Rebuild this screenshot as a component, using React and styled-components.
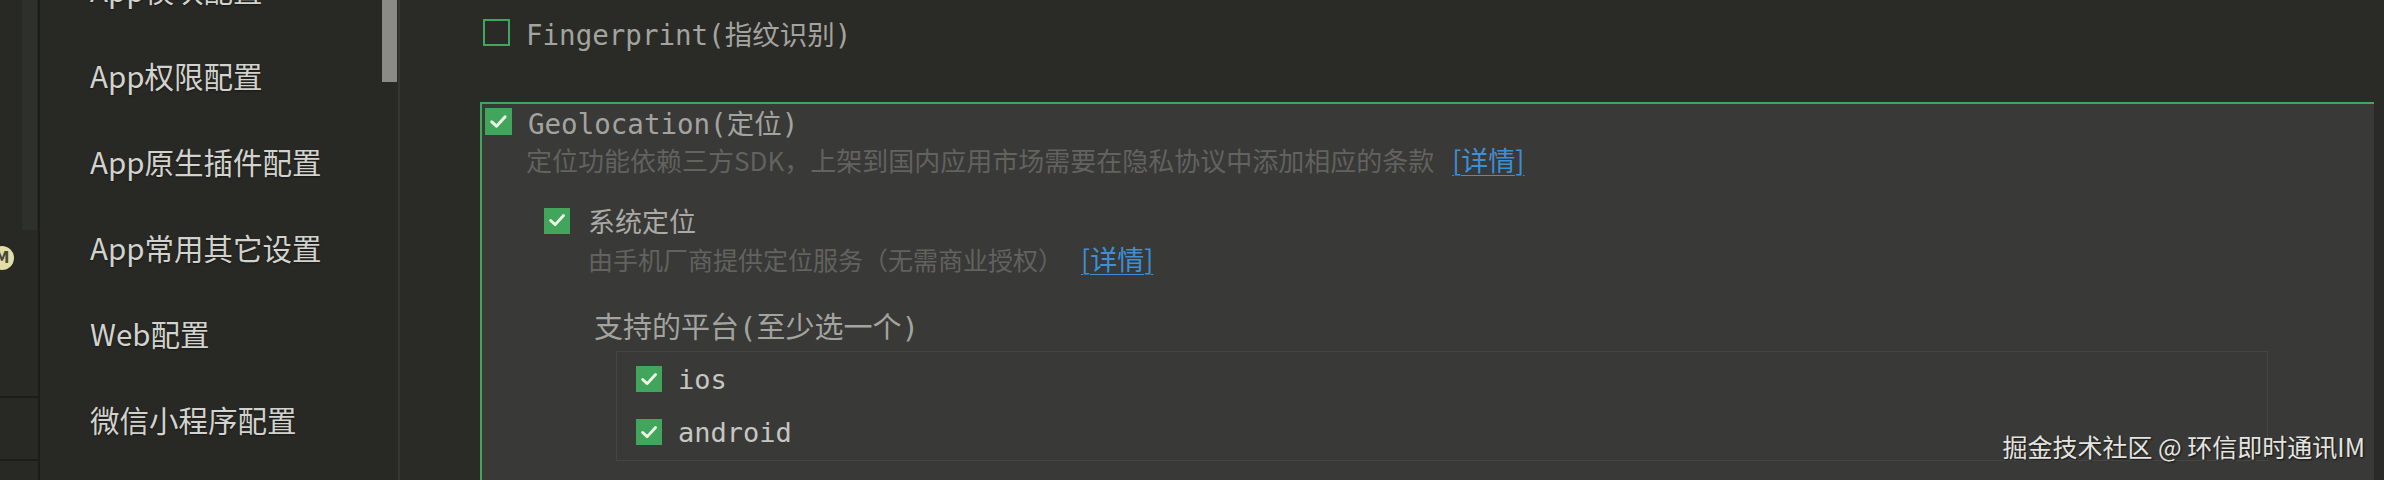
import styled, { createGlobalStyle } from "styled-components";

const COLORS = {
  bg: "#2a2a26",
  rail: "#282824",
  railLine: "#1c1c19",
  green: "#41a55c",
  panel: "#393937",
  label: "#a3a39f",
  bright: "#c6c6c2",
  dim: "#62625f",
  link: "#3d8fd6",
  sideText: "#d2d2ce",
};

const MENU = [
  "App模块配置",
  "App权限配置",
  "App原生插件配置",
  "App常用其它设置",
  "Web配置",
  "微信小程序配置",
];

const GlobalStyle = createGlobalStyle`
  html, body {
    margin: 0;
    padding: 0;
    background: ${COLORS.bg};
  }
  * { box-sizing: border-box; }
`;

const Check = ({ checked, size }) => (
  <Box $checked={checked} $size={size}>
    {checked && (
      <svg width="70%" height="70%" viewBox="0 0 24 24" fill="none">
        <path
          d="M3.5 12.5 L9.5 18 L20.5 6"
          stroke="#eef7e6"
          strokeWidth="3.8"
          strokeLinecap="round"
          strokeLinejoin="round"
        />
      </svg>
    )}
  </Box>
);

const App = () => {
  return (
    <>
      <GlobalStyle />
      <Screen>
        <Rail>
          <RailTrack />
          <RailTop />
          <RailCell />
          <RailRest />
          <Badge>M</Badge>
        </Rail>
        <Sidebar>
          <Thumb />
          {MENU.map((m) => (
            <MenuItem key={m}>{m}</MenuItem>
          ))}
        </Sidebar>
        <Main>
          <FingerRow>
            <Check size={27} />
            <MonoLabel>Fingerprint(指纹识别)</MonoLabel>
          </FingerRow>
          <GreenPanel>
            <Row>
              <Check checked size={27} />
              <MonoLabel>Geolocation(定位)</MonoLabel>
            </Row>
            <Desc $indent={41} $size={26}>
              定位功能依赖三方SDK，上架到国内应用市场需要在隐私协议中添加相应的条款
              <Link>[详情]</Link>
            </Desc>
            <SubSection>
              <Row>
                <Check checked size={26} />
                <SubLabel>系统定位</SubLabel>
              </Row>
              <Desc $indent={44} $size={25}>
                由手机厂商提供定位服务（无需商业授权）
                <Link>[详情]</Link>
              </Desc>
              <PlatformTitle>支持的平台(至少选一个)</PlatformTitle>
              <PlatformBox>
                <PlatformRow>
                  <Check checked size={26} />
                  <PlatformName>ios</PlatformName>
                </PlatformRow>
                <PlatformRow>
                  <Check checked size={26} />
                  <PlatformName>android</PlatformName>
                </PlatformRow>
              </PlatformBox>
            </SubSection>
          </GreenPanel>
        </Main>
        <Watermark>掘金技术社区 @ 环信即时通讯IM</Watermark>
      </Screen>
    </>
  );
};

const Screen = styled.div`
  position: relative;
  display: flex;
  width: 2384px;
  height: 480px;
  overflow: hidden;
  background: ${COLORS.bg};
  font-family: "Noto Sans CJK SC", "Noto Sans", sans-serif;
`;

const Rail = styled.div`
  position: relative;
  flex: 0 0 40px;
  display: flex;
  flex-direction: column;
  background: ${COLORS.rail};
  border-right: 2px solid ${COLORS.railLine};
`;
const RailTrack = styled.div`
  position: absolute;
  left: 22px;
  top: 0;
  width: 15px;
  height: 230px;
  background: #2e302b;
`;
const RailTop = styled.div`
  height: 398px;
  border-bottom: 2px solid ${COLORS.railLine};
`;
const RailCell = styled.div`
  height: 63px;
  border-bottom: 2px solid ${COLORS.railLine};
`;
const RailRest = styled.div`
  flex: 1;
`;
const Badge = styled.div`
  position: absolute;
  left: -10px;
  top: 246px;
  width: 24px;
  height: 24px;
  border-radius: 50%;
  background: #e2dea8;
  color: #4a4a3a;
  font: 600 15px "DejaVu Sans", sans-serif;
  display: flex;
  align-items: center;
  justify-content: center;
`;

const Sidebar = styled.div`
  position: relative;
  flex: 0 0 360px;
  display: flex;
  flex-direction: column;
  margin-top: -54px;
  padding-left: 50px;
  background: ${COLORS.rail};
  border-right: 2px solid #363633;
`;
const Thumb = styled.div`
  position: absolute;
  right: 1px;
  top: 54px;
  width: 15px;
  height: 82px;
  background: #8a8a87;
`;
const MenuItem = styled.div`
  height: 86px;
  display: flex;
  align-items: center;
  font-size: 29.5px;
  color: ${COLORS.sideText};
  text-shadow: 0 1px 2px rgba(0, 0, 0, 0.45);
  white-space: nowrap;
`;

const Main = styled.div`
  flex: 1;
  min-width: 0;
  padding-left: 80px;
  padding-top: 19px;
`;

const Box = styled.span`
  flex: 0 0 auto;
  width: ${(p) => p.$size}px;
  height: ${(p) => p.$size}px;
  display: inline-flex;
  align-items: center;
  justify-content: center;
  background: ${(p) => (p.$checked ? COLORS.green : "transparent")};
  border: ${(p) => (p.$checked ? "none" : `2px solid ${COLORS.green}`)};
`;

const Row = styled.div`
  display: flex;
  align-items: center;
  gap: 16px;
  height: 27px;
`;
const FingerRow = styled(Row)`
  padding-left: 3px;
`;

const MonoLabel = styled.span`
  font-family: "DejaVu Sans Mono", "Noto Sans CJK SC", monospace;
  font-size: 27.5px;
  color: ${COLORS.label};
  white-space: nowrap;
`;

const GreenPanel = styled.div`
  margin-top: 56px;
  margin-right: 10px;
  height: 400px;
  padding: 4px 0 0 3px;
  background: ${COLORS.panel};
  border-top: 2px solid ${COLORS.green};
  border-left: 2px solid ${COLORS.green};
`;

const Desc = styled.div`
  padding-left: ${(p) => p.$indent}px;
  font-size: ${(p) => p.$size}px;
  line-height: 36px;
  margin-top: 7px;
  color: ${COLORS.dim};
  white-space: nowrap;
`;
const Link = styled.span`
  margin-left: 18px;
  font-size: 27px;
  color: ${COLORS.link};
  text-decoration: underline;
  text-underline-offset: 4px;
  text-decoration-thickness: 1px;
`;

const SubSection = styled.div`
  padding-left: 59px;
  margin-top: 29px;
`;
const SubLabel = styled.span`
  margin-left: 2px;
  font-size: 27px;
  color: #a9a9a5;
`;

const PlatformTitle = styled.div`
  margin-top: 33px;
  padding-left: 50px;
  font-family: "DejaVu Sans Mono", "Noto Sans CJK SC", monospace;
  font-size: 29px;
  line-height: 36px;
  color: ${COLORS.label};
`;
const PlatformBox = styled.div`
  margin: 5px 0 0 72px;
  width: 1652px;
  height: 110px;
  padding: 14px 0 0 19px;
  display: flex;
  flex-direction: column;
  gap: 27px;
  border: 1px solid #454543;
`;
const PlatformRow = styled.div`
  display: flex;
  align-items: center;
  gap: 16px;
  height: 26px;
`;
const PlatformName = styled.span`
  font-family: "DejaVu Sans Mono", monospace;
  font-size: 27px;
  color: ${COLORS.bright};
`;

const Watermark = styled.div`
  position: absolute;
  right: 19px;
  bottom: 16px;
  font-size: 25px;
  color: #e4e4e0;
  text-shadow: 1px 1px 2px rgba(0, 0, 0, 0.7);
  white-space: nowrap;
`;

export default App;
